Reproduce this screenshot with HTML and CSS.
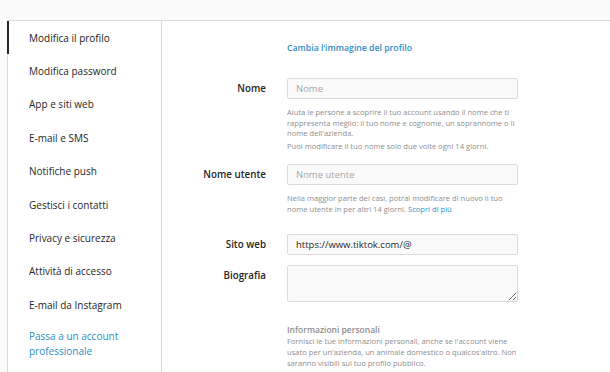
FILE: index.html
```html
<!DOCTYPE html>
<html lang="it">
<head>
<meta charset="utf-8">
<title>Modifica il profilo</title>
<link rel="stylesheet" href="styles.css">
</head>
<body>
<div class="topbar"></div>
<div class="card">
  <nav class="sidebar">
    <a class="nav-item active">Modifica il profilo</a>
    <a class="nav-item">Modifica password</a>
    <a class="nav-item">App e siti web</a>
    <a class="nav-item">E-mail e SMS</a>
    <a class="nav-item">Notifiche push</a>
    <a class="nav-item">Gestisci i contatti</a>
    <a class="nav-item">Privacy e sicurezza</a>
    <a class="nav-item">Attività di accesso</a>
    <a class="nav-item">E-mail da Instagram</a>
    <a class="nav-item pro">Passa a un account<br>professionale</a>
  </nav>
  <main class="main">
    <div class="row head-row">
      <div class="label"></div>
      <div class="field"><a class="link change-photo">Cambia l’immagine del profilo</a></div>
    </div>
    <div class="row row-name">
      <div class="label">Nome</div>
      <div class="field">
        <input class="input" type="text" placeholder="Nome">
        <div class="help">
          <p>Aiuta le persone a scoprire il tuo account usando il nome che ti rappresenta meglio: il tuo nome e cognome, un soprannome o il nome dell'azienda.</p>
          <p>Puoi modificare il tuo nome solo due volte ogni 14 giorni.</p>
        </div>
      </div>
    </div>
    <div class="row row-user">
      <div class="label">Nome utente</div>
      <div class="field">
        <input class="input" type="text" placeholder="Nome utente">
        <div class="help">
          <p>Nella maggior parte dei casi, potrai modificare di nuovo il tuo nome utente in per altri 14 giorni. <a class="link-sm">Scopri di più</a></p>
        </div>
      </div>
    </div>
    <div class="row">
      <div class="label">Sito web</div>
      <div class="field">
        <input class="input" type="text" value="https://www.tiktok.com/@">
      </div>
    </div>
    <div class="row">
      <div class="label">Biografia</div>
      <div class="field">
        <textarea class="textarea"></textarea>
      </div>
    </div>
    <div class="row row-info">
      <div class="label"></div>
      <div class="field">
        <h3 class="info-title">Informazioni personali</h3>
        <p class="info-text">Fornisci le tue informazioni personali, anche se l'account viene usato per un'azienda, un animale domestico o qualcos'altro. Non saranno visibili sul tuo profilo pubblico.</p>
      </div>
    </div>
  </main>
</div>
</body>
</html>
```

FILE: styles.css
```css
html, body {
  margin: 0;
  padding: 0;
  height: 100%;
  overflow: hidden;
}
body {
  background: #fafafa;
  font-family: "Open Sans", sans-serif;
  color: #262626;
}
.topbar {
  height: 20px;
}
.card {
  margin-left: 7px;
  width: 800px;
  height: 400px;
  background: #fff;
  border: 1px solid #dbdbdb;
  display: flex;
}
.sidebar {
  width: 153px;
  flex: none;
  border-right: 1px solid #dbdbdb;
  display: flex;
  flex-direction: column;
}
.nav-item {
  height: 33.4px;
  display: flex;
  align-items: center;
  padding-left: 20px;
  font-size: 10px;
  color: #262626;
  border-left: 2px solid transparent;
  margin-left: -1px;
}
.nav-item.active {
  border-left-color: #262626;
  font-weight: 500;
  color: #1a1a1a;
}
.nav-item.pro {
  height: 44px;
  line-height: 15px;
  color: #2b8fc6;
}
.main {
  flex: 1;
  padding-top: 20px;
}
.row {
  display: flex;
  gap: 21px;
  margin-bottom: 10px;
}
.head-row {
  margin-bottom: 23px;
}
.row-name {
  margin-bottom: 13px;
}
.row-user {
  margin-bottom: 20px;
}
.row-info {
  margin-top: 22px;
}
.label {
  width: 104px;
  flex: none;
  text-align: right;
  font-size: 9.8px;
  font-weight: 600;
  line-height: 21px;
}
.field {
  width: 231px;
}
.link {
  display: block;
  font-size: 8.7px;
  line-height: 14px;
  font-weight: 600;
  color: #2b8fc6;
}
.input {
  box-sizing: border-box;
  display: block;
  width: 231px;
  height: 21px;
  margin: 0;
  padding: 0 8px;
  border: 1px solid #dbdbdb;
  border-radius: 2px;
  background: #fafafa;
  font-family: "Open Sans", sans-serif;
  font-size: 9.5px;
  color: #262626;
  outline: none;
}
.input::placeholder {
  color: #a8a8a8;
}
.textarea {
  box-sizing: border-box;
  display: block;
  width: 231px;
  height: 37px;
  margin: 0;
  padding: 4px 8px;
  border: 1px solid #dbdbdb;
  border-radius: 2px;
  background: #fafafa;
  resize: vertical;
  font-family: "Open Sans", sans-serif;
}
.help {
  margin-top: 8px;
  font-size: 7.6px;
  line-height: 10.5px;
  color: #8e8e8e;
}
.help p {
  margin: 0 0 2px;
}
.help p:last-child {
  margin-bottom: 0;
}
.link-sm {
  color: #2b8fc6;
}
.info-title {
  margin: 0;
  font-size: 8.5px;
  line-height: 12px;
  font-weight: 600;
  color: #8e8e8e;
}
.info-text {
  margin: 0;
  font-size: 7.6px;
  line-height: 10.8px;
  color: #8e8e8e;
}
```
